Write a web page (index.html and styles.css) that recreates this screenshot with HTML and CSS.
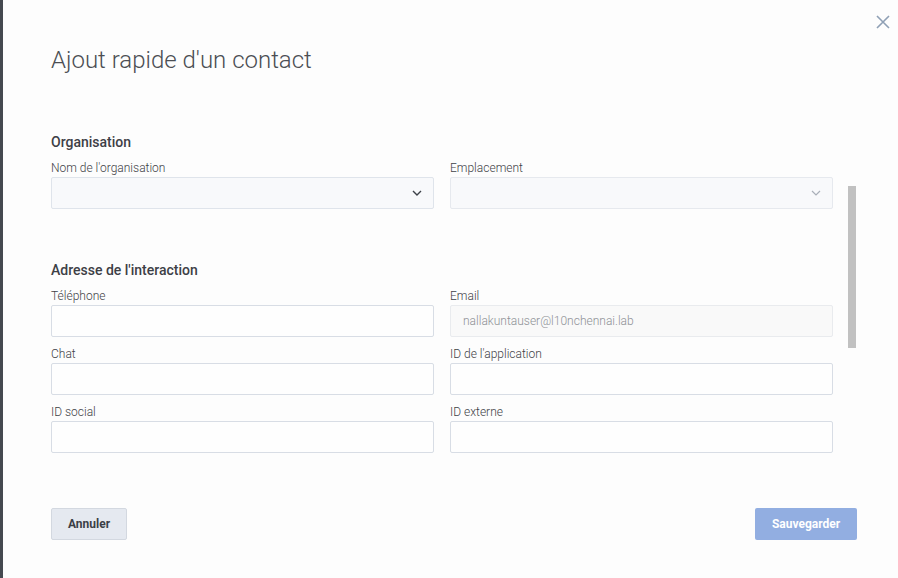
FILE: index.html
```html
<!DOCTYPE html>
<html lang="fr">
<head>
<meta charset="utf-8">
<title>Ajout rapide d'un contact</title>
<link rel="stylesheet" href="styles.css">
</head>
<body>
<div class="modal">
  <button class="close" aria-label="Fermer">
    <svg width="14" height="14" viewBox="0 0 14 14"><path d="M1 1L13 13M13 1L1 13" stroke="#8fa0b5" stroke-width="1.6" fill="none"/></svg>
  </button>
  <h1 class="title">Ajout rapide d'un contact</h1>
  <div class="body">
    <div class="form">
      <h2 class="section">Organisation</h2>
      <div class="grid">
        <div class="field">
          <label class="label">Nom de l'organisation</label>
          <div class="select">
            <svg width="10" height="6" viewBox="0 0 10 6"><path d="M1 1L5 5L9 1" stroke="#3d4148" stroke-width="1.4" fill="none"/></svg>
          </div>
        </div>
        <div class="field">
          <label class="label">Emplacement</label>
          <div class="select disabled">
            <svg width="10" height="6" viewBox="0 0 10 6"><path d="M1 1L5 5L9 1" stroke="#a9afb8" stroke-width="1.2" fill="none"/></svg>
          </div>
        </div>
      </div>
      <h2 class="section second">Adresse de l'interaction</h2>
      <div class="grid rows">
        <div class="field">
          <label class="label">Téléphone</label>
          <div class="input"></div>
        </div>
        <div class="field">
          <label class="label">Email</label>
          <div class="input readonly">nallakuntauser@l10nchennai.lab</div>
        </div>
        <div class="field">
          <label class="label">Chat</label>
          <div class="input"></div>
        </div>
        <div class="field">
          <label class="label">ID de l'application</label>
          <div class="input"></div>
        </div>
        <div class="field">
          <label class="label">ID social</label>
          <div class="input"></div>
        </div>
        <div class="field">
          <label class="label">ID externe</label>
          <div class="input"></div>
        </div>
      </div>
    </div>
    <div class="scrolltrack"><div class="thumb"></div></div>
  </div>
  <div class="footer">
    <button class="btn cancel">Annuler</button>
    <button class="btn save">Sauvegarder</button>
  </div>
</div>
</body>
</html>
```
FILE: styles.css
```css
html, body {
  margin: 0;
  padding: 0;
  height: 100%;
}
body {
  background: #454950;
  font-family: Roboto, "Liberation Sans", Arial, sans-serif;
  overflow: hidden;
}
.modal {
  position: relative;
  margin-left: 3px;
  height: 578px;
  background: #fdfdfd;
  padding: 44px 41px 0 48px;
  box-sizing: border-box;
}
.close {
  position: absolute;
  top: 15px;
  right: 8px;
  width: 14px;
  height: 14px;
  padding: 0;
  border: 0;
  background: none;
  display: flex;
}
.title {
  margin: 0;
  font-size: 24px;
  line-height: 32px;
  font-weight: 300;
  color: #4b4e53;
}
.body {
  display: flex;
  margin-top: 56px;
}
.form {
  width: 782px;
}
.scrolltrack {
  flex: 1;
  display: flex;
  justify-content: flex-start;
  padding-top: 54px;
}
.thumb {
  width: 8px;
  height: 162px;
  background: #c1c1c1;
  margin-left: 15px;
}
.section {
  margin: 0 0 8px;
  font-size: 14px;
  line-height: 20px;
  font-weight: 500;
  color: #3d4046;
}
.section.second {
  margin-top: 51px;
}
.grid {
  display: grid;
  grid-template-columns: 383px 383px;
  column-gap: 16px;
  row-gap: 9px;
}
.field {
  display: flex;
  flex-direction: column;
}
.label {
  font-size: 12px;
  line-height: 16px;
  font-weight: 300;
  color: #3f4247;
  margin-bottom: 1px;
}
.select, .input {
  height: 32px;
  box-sizing: border-box;
  border: 1px solid #d8dde5;
  border-radius: 2px;
  background: #fefefe;
}
.select {
  background: #f8f9fb;
  display: flex;
  align-items: center;
  justify-content: flex-end;
  padding-right: 11px;
  border-color: #dfe4eb;
}
.select.disabled {
  border-color: #e6e9ee;
}
.input.readonly {
  background: #f9f9f9;
  border-color: #e9ebee;
  font-size: 12px;
  line-height: 30px;
  font-weight: 300;
  color: #8e9196;
  padding-left: 12px;
}
.footer {
  display: flex;
  justify-content: space-between;
  margin-top: 55px;
}
.btn {
  height: 32px;
  border-radius: 2px;
  font-family: Roboto, "Liberation Sans", Arial, sans-serif;
  font-size: 12px;
  font-weight: 700;
  padding: 0;
}
.cancel {
  width: 76px;
  background: #e5e9f0;
  border: 1px solid #d3d8e0;
  color: #3b3f46;
}
.save {
  width: 102px;
  background: #92aee1;
  border: 0;
  color: #ffffff;
}
```
